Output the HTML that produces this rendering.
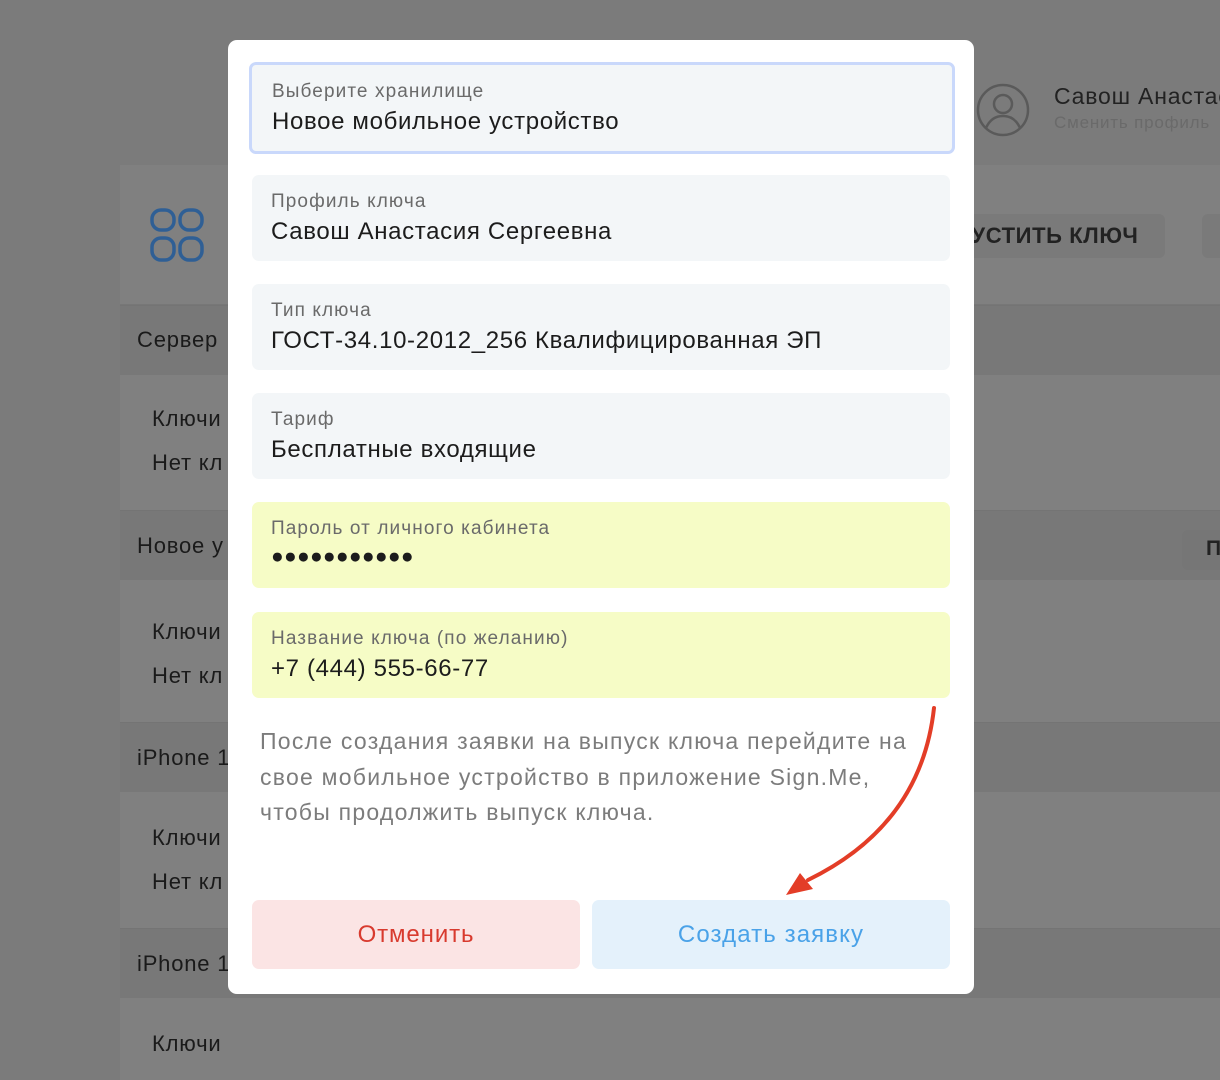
<!DOCTYPE html>
<html><head><meta charset="utf-8"><style>
*{box-sizing:border-box;margin:0;padding:0}
body{width:1220px;height:1080px;overflow:hidden;background:#7b7b7b;font-family:"Liberation Sans","DejaVu Sans",sans-serif;position:relative}
.abs{position:absolute;white-space:nowrap}
.panel{left:120px;top:165px;width:1100px;height:915px;background:#808080}
.hdr{left:120px;width:1100px;height:70px;background:#787878;border-top:1px solid #747474}
.bt{font-size:22px;color:#1a1a1a;letter-spacing:0.8px}
.modal{left:228px;top:40px;width:746px;height:954px;background:#fff;border-radius:9px}
.f{position:absolute;left:24px;width:698px;height:86px;background:#f3f6f8;border-radius:7px;padding:16px 19px;white-space:nowrap}
.f .l{font-size:19px;color:#6a6a6a;letter-spacing:1.1px}
.f .v{font-size:24px;color:#1c1c1c;margin-top:5px;letter-spacing:0.65px}
.y{background:#f6fcc6}
</style></head><body>
<div class="abs panel"></div>
<div class="abs" style="left:120px;top:304px;width:1100px;height:1px;background:#777"></div>
<div class="abs hdr" style="top:305px"></div>
<div class="abs hdr" style="top:510px"></div>
<div class="abs hdr" style="top:722px"></div>
<div class="abs hdr" style="top:928px"></div>
<div class="abs bt" style="left:137px;top:327px">Сервер</div>
<div class="abs bt" style="left:152px;top:406px">Ключи</div>
<div class="abs bt" style="left:152px;top:450px">Нет кл</div>
<div class="abs bt" style="left:137px;top:533px">Новое у</div>
<div class="abs bt" style="left:152px;top:619px">Ключи</div>
<div class="abs bt" style="left:152px;top:663px">Нет кл</div>
<div class="abs bt" style="left:137px;top:745px">iPhone 1</div>
<div class="abs bt" style="left:152px;top:825px">Ключи</div>
<div class="abs bt" style="left:152px;top:869px">Нет кл</div>
<div class="abs bt" style="left:137px;top:951px">iPhone 1</div>
<div class="abs bt" style="left:152px;top:1031px">Ключи</div>
<svg class="abs" style="left:150px;top:208px" width="56" height="56" viewBox="0 0 56 56" fill="none" stroke="#2f5f95" stroke-width="3.5"><rect x="2" y="2" width="22" height="20" rx="9"/><rect x="30" y="2" width="22" height="20" rx="9"/><rect x="2" y="30" width="22" height="22" rx="9"/><rect x="30" y="30" width="22" height="22" rx="9"/></svg>
<svg class="abs" style="left:976px;top:82px" width="56" height="56" viewBox="0 0 56 56" fill="none" stroke="#5a5a5a" stroke-width="2.5"><circle cx="27" cy="28" r="25"/><circle cx="27" cy="22" r="9"/><path d="M10 46c4-9 10-12 17-12s13 3 17 12"/></svg>
<div class="abs" style="left:1054px;top:83px;font-size:23px;color:#222;letter-spacing:0.8px">Савош Анастасия</div>
<div class="abs" style="left:1054px;top:113px;font-size:17px;color:#6a6a6a;letter-spacing:0.8px">Сменить профиль</div>
<div class="abs" style="left:940px;top:214px;width:225px;height:44px;background:#7a7a7a;border-radius:6px"></div>
<div class="abs" style="left:955px;top:223px;font-size:22px;font-weight:bold;color:#222;letter-spacing:0.6px">ПУСТИТЬ КЛЮЧ</div>
<div class="abs" style="left:1202px;top:214px;width:30px;height:44px;background:#7a7a7a;border-radius:6px"></div>
<div class="abs" style="left:1182px;top:530px;width:50px;height:40px;background:#767676;border-radius:6px"></div>
<div class="abs" style="left:1206px;top:537px;font-size:21px;font-weight:bold;color:#222">П</div>

<div class="abs modal">
 <div class="f" style="top:22px;left:21px;width:706px;height:92px;border:3px solid #c9d8fb;padding:16px 20px"><div class="l">Выберите хранилище</div><div class="v">Новое мобильное устройство</div></div>
 <div class="f" style="top:135px"><div class="l">Профиль ключа</div><div class="v">Савош Анастасия Сергеевна</div></div>
 <div class="f" style="top:244px"><div class="l">Тип ключа</div><div class="v">ГОСТ-34.10-2012_256 Квалифицированная ЭП</div></div>
 <div class="f" style="top:353px"><div class="l">Тариф</div><div class="v">Бесплатные входящие</div></div>
 <div class="f y" style="top:462px"><div class="l">Пароль от личного кабинета</div><div class="v" style="font-size:21px;letter-spacing:0.3px">●●●●●●●●●●●</div></div>
 <div class="f y" style="top:572px"><div class="l">Название ключа (по желанию)</div><div class="v">+7 (444) 555-66-77</div></div>
 <div class="abs" style="left:32px;top:684px;font-size:23px;line-height:35.5px;color:#7c7c7c;letter-spacing:1.25px">После создания заявки на выпуск ключа перейдите на<br>свое мобильное устройство в приложение Sign.Me,<br>чтобы продолжить выпуск ключа.</div>
 <div class="abs" style="left:24px;top:860px;width:328px;height:69px;background:#fbe4e4;border-radius:7px;color:#d83a2e;font-size:24px;text-align:center;line-height:69px;letter-spacing:0.9px">Отменить</div>
 <div class="abs" style="left:364px;top:860px;width:358px;height:69px;background:#e4f1fb;border-radius:7px;color:#4aa2e8;font-size:24px;text-align:center;line-height:69px;letter-spacing:1.1px">Создать заявку</div>
</div>
<svg class="abs" style="left:0;top:0" width="1220" height="1080"><path d="M934 708C925 790 880 845 808 880" fill="none" stroke="#e33d27" stroke-width="4" stroke-linecap="round"/><polygon points="786,895 800,873 813,889" fill="#e33d27"/></svg>
</body></html>
